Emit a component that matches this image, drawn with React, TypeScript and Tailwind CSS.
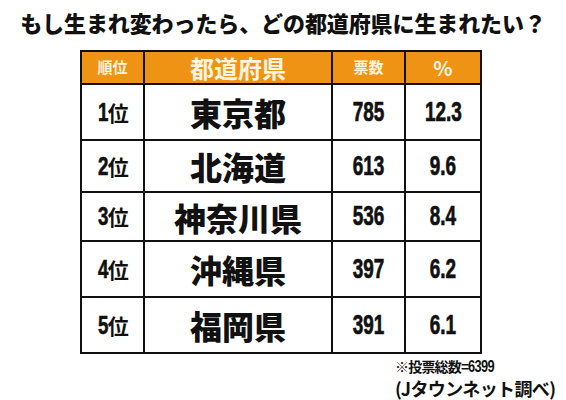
const rows = [
  { rank: '1', pref: '東京都', votes: '785', pct: '12.3', h: 'h-[56px]' },
  { rank: '2', pref: '北海道', votes: '613', pct: '9.6', h: 'h-[52px]' },
  { rank: '3', pref: '神奈川県', votes: '536', pct: '8.4', h: 'h-[49px]' },
  { rank: '4', pref: '沖縄県', votes: '397', pct: '6.2', h: 'h-[56px]' },
  { rank: '5', pref: '福岡県', votes: '391', pct: '6.1', h: 'h-[56px]' },
];

const jp = "font-['Noto_Sans_CJK_JP',sans-serif]";
const num = "font-['Liberation_Sans','Noto_Sans_CJK_JP',sans-serif]";

// condensed heavy digits, like the poster's narrow face
function Num({ children }: { children: string }) {
  return (
    <span className={`inline-block ${num} text-[27px] font-bold scale-x-[0.7] origin-center [-webkit-text-stroke:0.7px_#111]`}>
      {children}
    </span>
  );
}

export default function App() {
  return (
    <div className={`w-[566px] h-[400px] bg-white text-[#111] ${jp} overflow-hidden`}>
      <h1 className="pt-[6px] text-center text-[22px] font-black leading-[32px] tracking-[-0.1px]">
        もし生まれ変わったら、どの都道府県に生まれたい？
      </h1>

      <table className="ml-[80px] mt-[12px] w-[400px] border-collapse border-[2px] border-[#111] table-fixed">
        <colgroup>
          <col className="w-[63px]" />
          <col className="w-[188px]" />
          <col className="w-[73px]" />
          <col className="w-[76px]" />
        </colgroup>
        <thead>
          <tr className="h-[33px] bg-[#ef9314] text-[#fff4e0]">
            <th className="border-[2px] border-[#111] text-[15px] font-bold p-0">順位</th>
            <th className="border-[2px] border-[#111] text-[24px] font-bold p-0 leading-none">都道府県</th>
            <th className="border-[2px] border-[#111] text-[15px] font-bold p-0">票数</th>
            <th className="border-[2px] border-[#111] text-[20px] font-bold p-0">%</th>
          </tr>
        </thead>
        <tbody>
          {rows.map((r) => (
            <tr key={r.rank} className={r.h}>
              <td className="border-[2px] border-[#111] p-0 text-center whitespace-nowrap">
                <span className={`inline-block ${num} text-[26px] font-bold scale-x-[0.72] -mr-[3px] [-webkit-text-stroke:0.6px_#111]`}>{r.rank}</span>
                <span className="text-[21px] font-bold">位</span>
              </td>
              <td className="border-[2px] border-[#111] p-0 text-center text-[32px] font-black leading-none">
                {r.pref}
              </td>
              <td className="border-[2px] border-[#111] p-0 text-center">
                <Num>{r.votes}</Num>
              </td>
              <td className="border-[2px] border-[#111] p-0 text-center">
                <Num>{r.pct}</Num>
              </td>
            </tr>
          ))}
        </tbody>
      </table>

      <div className="ml-[395px] mt-[3px] font-bold whitespace-nowrap">
        <div className="text-[14px] leading-[18px] tracking-[-0.8px]">
          ※投票総数=<span className={`inline-block ${num} text-[16px] scale-x-[0.8] origin-left`}>6399</span>
        </div>
        <div className="text-[18px] leading-[24px] tracking-[-0.6px]">(Jタウンネット調べ)</div>
      </div>
    </div>
  );
}
